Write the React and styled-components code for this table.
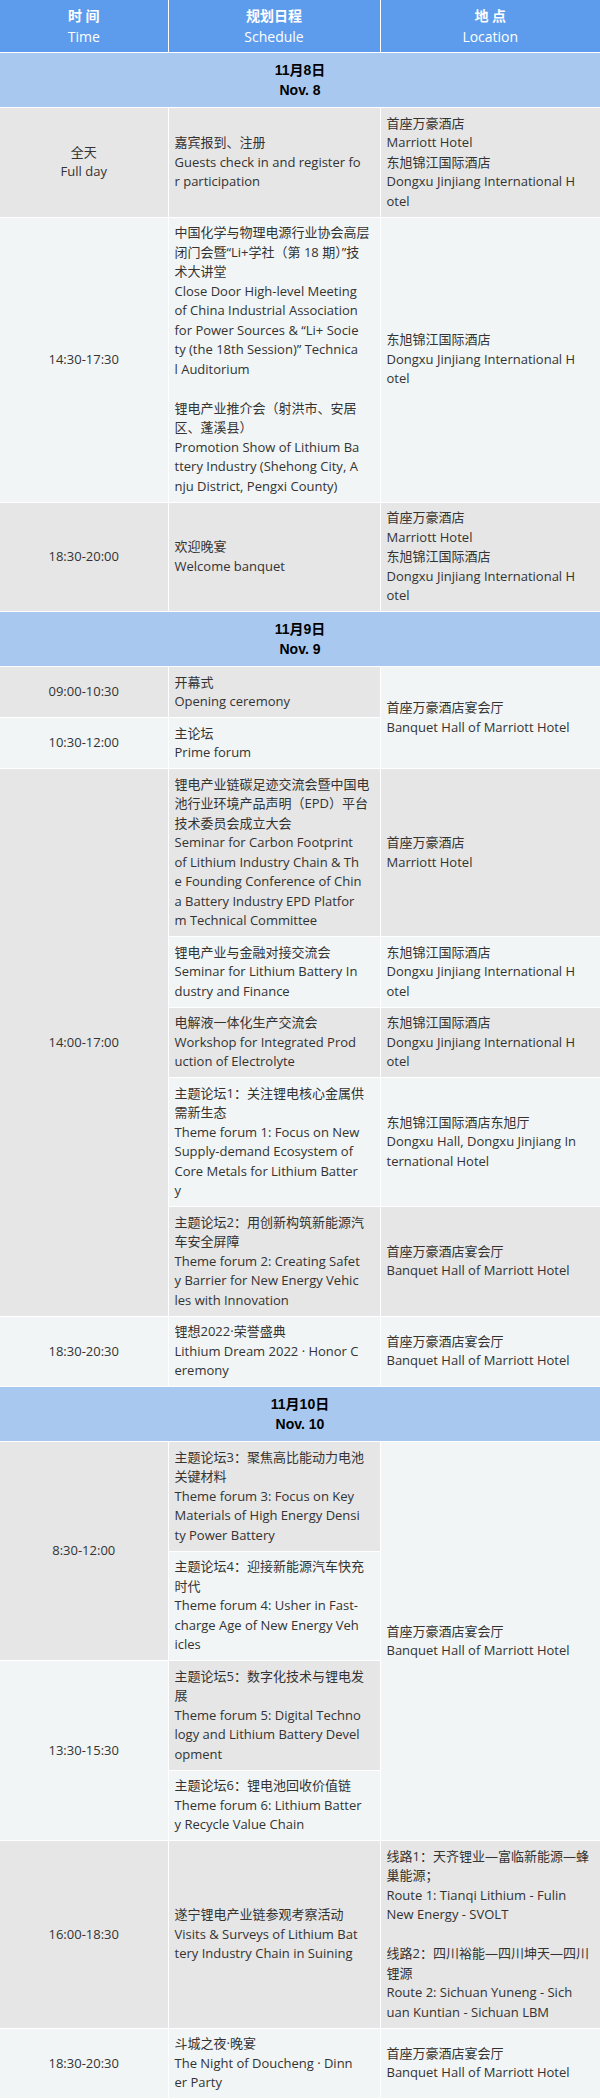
import React from "react";
import styled, { createGlobalStyle } from "styled-components";

const GlobalStyle = createGlobalStyle`
  body {
    margin: 0;
    background: #fff;
  }
`;

const Table = styled.table`
  width: 600px;
  table-layout: fixed;
  border-collapse: collapse;
  border-style: hidden;
  font-family: "Open Sans", "Noto Sans CJK SC", sans-serif;
  font-size: 13px;
  line-height: 19.5px;
  color: #333;
`;

const HeadCell = styled.th`
  background: #5d9cec;
  color: #fff;
  font-weight: normal;
  font-size: 14px;
  line-height: 21px;
  padding: 5px 6px;
  border: 1px solid #fff;
  text-align: center;
`;

const HeadCn = styled.div`
  font-weight: bold;
`;

const DateCell = styled.td`
  background: #a9c8ef;
  color: #000;
  font-family: "Liberation Sans", "Noto Sans CJK SC", sans-serif;
  font-weight: bold;
  font-size: 14px;
  line-height: 20px;
  padding: 7px 6px;
  border: 1px solid #fff;
  text-align: center;
`;

const Cell = styled.td`
  background: ${props => (props.$shade === "gray" ? "#e6e6e6" : "#f1f5f6")};
  text-align: ${props => (props.$center ? "center" : "left")};
  vertical-align: middle;
  padding: 5.5px 6px;
  border: 1px solid #fff;
  overflow: hidden;
`;

const Line = styled.div`
  white-space: nowrap;
  min-height: 19.5px;
`;

const G = "gray";
const L = "light";

const DONGXU = ["东旭锦江国际酒店", "Dongxu Jinjiang International H", "otel"];
const BANQUET = ["首座万豪酒店宴会厅", "Banquet Hall of Marriott Hotel"];
const BOTH = ["首座万豪酒店", "Marriott Hotel", ...DONGXU];

const days = [
  {
    cn: "11月8日",
    en: "Nov. 8",
    rows: [
      [
        { time: true, shade: G, lines: ["全天", "Full day"] },
        { shade: G, lines: ["嘉宾报到、注册", "Guests check in and register fo", "r participation"] },
        { shade: G, lines: BOTH }
      ],
      [
        { time: true, shade: L, lines: ["14:30-17:30"] },
        {
          shade: L,
          lines: [
            "中国化学与物理电源行业协会高层",
            "闭门会暨“Li+学社（第 18 期）”技",
            "术大讲堂",
            "Close Door High-level Meeting",
            "of China Industrial Association",
            "for Power Sources & “Li+ Socie",
            "ty (the 18th Session)” Technica",
            "l Auditorium",
            "",
            "锂电产业推介会（射洪市、安居",
            "区、蓬溪县）",
            "Promotion Show of Lithium Ba",
            "ttery Industry (Shehong City, A",
            "nju District, Pengxi County)"
          ]
        },
        { shade: L, lines: DONGXU }
      ],
      [
        { time: true, shade: G, lines: ["18:30-20:00"] },
        { shade: G, lines: ["欢迎晚宴", "Welcome banquet"] },
        { shade: G, lines: BOTH }
      ]
    ]
  },
  {
    cn: "11月9日",
    en: "Nov. 9",
    rows: [
      [
        { time: true, shade: G, lines: ["09:00-10:30"] },
        { shade: G, lines: ["开幕式", "Opening ceremony"] },
        { shade: L, span: 2, lines: BANQUET }
      ],
      [
        { time: true, shade: L, lines: ["10:30-12:00"] },
        { shade: L, lines: ["主论坛", "Prime forum"] }
      ],
      [
        { time: true, shade: G, span: 5, lines: ["14:00-17:00"] },
        {
          shade: G,
          lines: [
            "锂电产业链碳足迹交流会暨中国电",
            "池行业环境产品声明（EPD）平台",
            "技术委员会成立大会",
            "Seminar for Carbon Footprint",
            "of Lithium Industry Chain & Th",
            "e Founding Conference of Chin",
            "a Battery Industry EPD Platfor",
            "m Technical Committee"
          ]
        },
        { shade: G, lines: ["首座万豪酒店", "Marriott Hotel"] }
      ],
      [
        { shade: L, lines: ["锂电产业与金融对接交流会", "Seminar for Lithium Battery In", "dustry and Finance"] },
        { shade: L, lines: DONGXU }
      ],
      [
        { shade: G, lines: ["电解液一体化生产交流会", "Workshop for Integrated Prod", "uction of Electrolyte"] },
        { shade: G, lines: DONGXU }
      ],
      [
        {
          shade: L,
          lines: [
            "主题论坛1：关注锂电核心金属供",
            "需新生态",
            "Theme forum 1: Focus on New",
            "Supply-demand Ecosystem of",
            "Core Metals for Lithium Batter",
            "y"
          ]
        },
        { shade: L, lines: ["东旭锦江国际酒店东旭厅", "Dongxu Hall, Dongxu Jinjiang In", "ternational Hotel"] }
      ],
      [
        {
          shade: G,
          lines: [
            "主题论坛2：用创新构筑新能源汽",
            "车安全屏障",
            "Theme forum 2: Creating Safet",
            "y Barrier for New Energy Vehic",
            "les with Innovation"
          ]
        },
        { shade: G, lines: BANQUET }
      ],
      [
        { time: true, shade: L, lines: ["18:30-20:30"] },
        { shade: L, lines: ["锂想2022·荣誉盛典", "Lithium Dream 2022 · Honor C", "eremony"] },
        { shade: L, lines: BANQUET }
      ]
    ]
  },
  {
    cn: "11月10日",
    en: "Nov. 10",
    rows: [
      [
        { time: true, shade: G, span: 2, lines: ["8:30-12:00"] },
        {
          shade: G,
          lines: [
            "主题论坛3：聚焦高比能动力电池",
            "关键材料",
            "Theme forum 3: Focus on Key",
            "Materials of High Energy Densi",
            "ty Power Battery"
          ]
        },
        { shade: L, span: 4, lines: BANQUET }
      ],
      [
        {
          shade: L,
          lines: [
            "主题论坛4：迎接新能源汽车快充",
            "时代",
            "Theme forum 4: Usher in Fast-",
            "charge Age of New Energy Veh",
            "icles"
          ]
        }
      ],
      [
        { time: true, shade: L, span: 2, lines: ["13:30-15:30"] },
        {
          shade: G,
          lines: [
            "主题论坛5：数字化技术与锂电发",
            "展",
            "Theme forum 5: Digital Techno",
            "logy and Lithium Battery Devel",
            "opment"
          ]
        }
      ],
      [
        { shade: L, lines: ["主题论坛6：锂电池回收价值链", "Theme forum 6: Lithium Batter", "y Recycle Value Chain"] }
      ],
      [
        { time: true, shade: G, lines: ["16:00-18:30"] },
        { shade: G, lines: ["遂宁锂电产业链参观考察活动", "Visits & Surveys of Lithium Bat", "tery Industry Chain in Suining"] },
        {
          shade: G,
          lines: [
            "线路1：天齐锂业—富临新能源—蜂",
            "巢能源；",
            "Route 1: Tianqi Lithium - Fulin",
            "New Energy - SVOLT",
            "",
            "线路2：四川裕能—四川坤天—四川",
            "锂源",
            "Route 2: Sichuan Yuneng - Sich",
            "uan Kuntian - Sichuan LBM"
          ]
        }
      ],
      [
        { time: true, shade: L, lines: ["18:30-20:30"] },
        { shade: L, lines: ["斗城之夜·晚宴", "The Night of Doucheng · Dinn", "er Party"] },
        { shade: L, lines: BANQUET }
      ]
    ]
  }
];

const Lines = ({ lines }) =>
  lines.map((text, i) => <Line key={i}>{text}</Line>);

export default function App() {
  return (
    <>
      <GlobalStyle />
      <Table>
        <colgroup>
          <col style={{ width: 168 }} />
          <col style={{ width: 212 }} />
          <col style={{ width: 220 }} />
        </colgroup>
        <thead>
          <tr>
            <HeadCell>
              <HeadCn>时 间</HeadCn>
              <div>Time</div>
            </HeadCell>
            <HeadCell>
              <HeadCn>规划日程</HeadCn>
              <div>Schedule</div>
            </HeadCell>
            <HeadCell>
              <HeadCn>地 点</HeadCn>
              <div>Location</div>
            </HeadCell>
          </tr>
        </thead>
        {days.map(day => (
          <tbody key={day.cn}>
            <tr>
              <DateCell colSpan={3}>
                <div>{day.cn}</div>
                <div>{day.en}</div>
              </DateCell>
            </tr>
            {day.rows.map((cells, r) => (
              <tr key={r}>
                {cells.map((c, i) => (
                  <Cell key={i} $shade={c.shade} $center={c.time} rowSpan={c.span || 1}>
                    <Lines lines={c.lines} />
                  </Cell>
                ))}
              </tr>
            ))}
          </tbody>
        ))}
      </Table>
    </>
  );
}
